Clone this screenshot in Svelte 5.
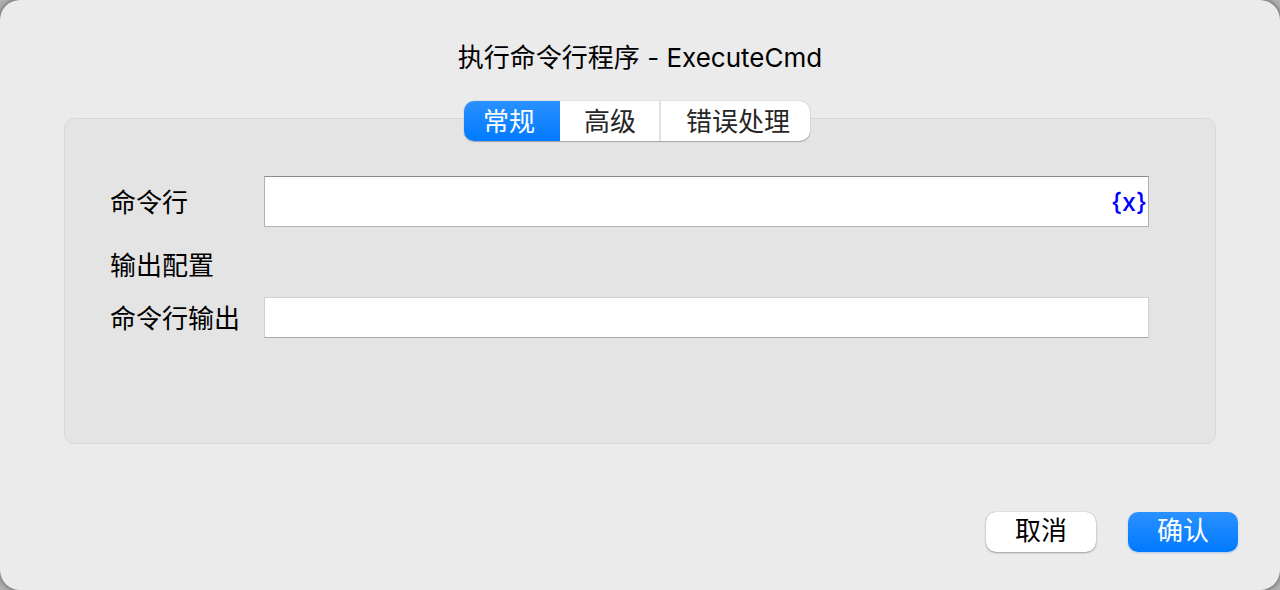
<script>
  const tabs = ['常规', '高级', '错误处理'];
  let active = $state(0);
  let command = $state('');
  let output = $state('');
</script>

<main class="dialog" aria-labelledby="dialog-title">
  <h1 id="dialog-title">执行命令行程序 - ExecuteCmd</h1>

  <div class="tabs" role="tablist">
    {#each tabs as tab, i}
      <button
        type="button"
        role="tab"
        class:active={active === i}
        aria-selected={active === i}
        onclick={() => (active = i)}>{tab}</button>
    {/each}
  </div>

  <section class="panel">
    <div class="row">
      <label for="command">命令行</label>
      <div class="expression">
        <input id="command" type="text" bind:value={command} />
        <button type="button">{'{x}'}</button>
      </div>
    </div>
    <h2>输出配置</h2>
    <div class="row">
      <label for="output">命令行输出</label>
      <input id="output" class="plain" type="text" bind:value={output} />
    </div>
  </section>

  <footer>
    <button type="button" class="push">取消</button>
    <button type="button" class="push primary">确认</button>
  </footer>
</main>

<style>
  :global(body) {
    margin: 0;
    background: #b0b0b0;
  }

  .dialog,
  .dialog * {
    box-sizing: border-box;
  }

  .dialog {
    display: flex;
    flex-direction: column;
    min-height: 100vh;
    padding: 39px 42px 38px 64px;
    border-radius: 20px;
    background: #ebebeb;
    box-shadow: 0 0 5px rgba(0, 0, 0, 0.6);
    color: #000;
    font: 26px/38px Inter, 'Noto Sans CJK SC', sans-serif;
  }

  h1,
  h2 {
    margin: 0;
    font: inherit;
  }

  h1 {
    margin-right: 22px;
    text-align: center;
  }

  button,
  input {
    margin: 0;
    padding: 0;
    border: 0;
    color: inherit;
    font: inherit;
  }

  .tabs {
    z-index: 1;
    display: flex;
    align-self: center;
    margin: 24px 28px -23px 0;
    border-radius: 10px;
    background: #fff;
    box-shadow: 0 0 1px rgba(0, 0, 0, 0.4), 0 1px 1px rgba(0, 0, 0, 0.25);
  }

  .tabs button {
    height: 40px;
    padding: 2px 23px 0 24px;
    background: transparent;
    color: #262626;
  }

  .tabs button:first-child {
    padding: 2px 25px 0 19px;
    border-radius: 10px 0 0 10px;
  }

  .tabs button:last-child {
    padding: 2px 20px 0 25px;
    border-left: 2px solid #e2e2e2;
    border-radius: 0 10px 10px 0;
  }

  .tabs .active {
    background: linear-gradient(#2b91ff, #007aff);
    color: #fff;
  }

  .panel {
    flex: 1;
    margin-right: 22px;
    padding: 57px 66px 57px 45px;
    border: 1px solid #d8d8d8;
    border-radius: 10px;
    background: #e4e4e4;
  }

  .row {
    display: grid;
    grid-template-columns: 154px 1fr;
    align-items: center;
  }

  label {
    padding-top: 2px;
  }

  h2 {
    margin: 20px 0 12px;
  }

  .expression {
    display: flex;
    height: 51px;
    border: 1px solid #b2b2b2;
    border-top-color: #8c8c8c;
    background: #fff;
  }

  .expression input {
    flex: 1;
    min-width: 0;
    padding-left: 6px;
    background: transparent;
  }

  .expression button {
    padding: 0 1px;
    background: transparent;
    color: #00f;
    font-size: 25px;
    font-weight: 500;
  }

  .plain {
    width: 100%;
    height: 41px;
    padding: 0 6px;
    border: 1px solid #cfcfcf;
    border-bottom-color: #a8a8a8;
    background: #fff;
  }

  footer {
    display: flex;
    justify-content: flex-end;
    gap: 32px;
    margin-top: 68px;
  }

  .push {
    width: 110px;
    height: 40px;
    padding-bottom: 2px;
    border-radius: 10px;
    background: #fff;
    box-shadow: 0 0 1px rgba(0, 0, 0, 0.35), 0 1px 2px rgba(0, 0, 0, 0.3);
  }

  .primary {
    background: linear-gradient(#2b91ff, #007aff);
    box-shadow: 0 1px 2px rgba(0, 90, 220, 0.25);
    color: #fff;
  }
</style>
